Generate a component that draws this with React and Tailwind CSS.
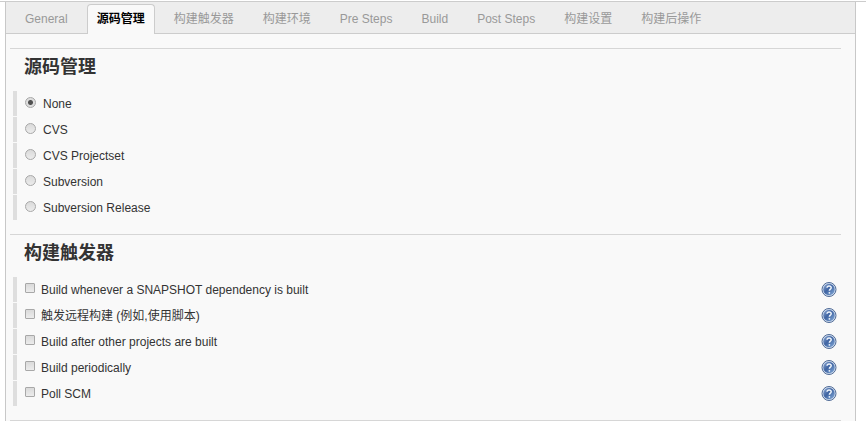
import React, { useState } from 'react';
import clsx from 'clsx';

const TABS = [
  'General',
  '源码管理',
  '构建触发器',
  '构建环境',
  'Pre Steps',
  'Build',
  'Post Steps',
  '构建设置',
  '构建后操作',
];

const SCM_OPTIONS = ['None', 'CVS', 'CVS Projectset', 'Subversion', 'Subversion Release'];

const TRIGGERS = [
  'Build whenever a SNAPSHOT dependency is built',
  '触发远程构建 (例如,使用脚本)',
  'Build after other projects are built',
  'Build periodically',
  'Poll SCM',
];

const HelpIcon = () => (
  <svg width="16" height="16" viewBox="0 0 16 16" aria-hidden="true">
    <defs>
      <linearGradient id="help-fill" x1="0" y1="0" x2="1" y2="1">
        <stop offset="0" stopColor="#8fabd6" />
        <stop offset="0.45" stopColor="#3f64a2" />
        <stop offset="1" stopColor="#86addb" />
      </linearGradient>
    </defs>
    <circle cx="8" cy="7.5" r="7" fill="#d3dfef" stroke="#4f6a96" strokeWidth="1" />
    <circle cx="8" cy="7.5" r="5.7" fill="url(#help-fill)" />
    <path
      d="M6 5.8C6.1 4.5 7 3.9 8.1 3.9c1.3 0 2.1.7 2.1 1.8 0 1.4-1.8 1.5-1.8 3"
      fill="none"
      stroke="#eef4fb"
      strokeWidth="1.5"
    />
    <circle cx="8.4" cy="10.8" r="0.9" fill="#eef4fb" />
  </svg>
);

const Section = ({ title, children }) => (
  <section className="ml-1 mr-[14px] border-t border-[#d6d6d6] pb-[13px]">
    <h2 className="h-[42px] pl-[14px] pt-1 text-lg leading-7 font-bold text-[#333]">{title}</h2>
    <div className="pl-[3px]">{children}</div>
  </section>
);

const Row = ({ children }) => (
  <div className="flex h-[26px] items-center pr-1">
    <span className="mr-2 h-[25px] w-1 self-start bg-[#dedede]" />
    {children}
  </div>
);

const App = () => {
  const [activeTab, setActiveTab] = useState('源码管理');
  const [scm, setScm] = useState('None');

  return (
    <div className="overflow-hidden bg-white pt-px font-['Liberation_Sans','Noto_Sans_CJK_SC',sans-serif] text-xs text-[#333]">
      <div className="border-t border-[#ccc] pl-[5px] pr-[10px]">
        <div className="border-x border-[#c8c8c8] bg-[#f9f9f9]">
          {/* Tabs */}
          <nav className="flex h-8 items-end gap-[9px] border-b border-[#ccc] bg-[#ededed] pl-[9px]">
            {TABS.map((tab) => (
              <button
                key={tab}
                onClick={() => setActiveTab(tab)}
                className={clsx(
                  '-mb-px h-[30px] whitespace-nowrap rounded-t border border-b-0 px-[9px] pb-[2px]',
                  tab === activeTab
                    ? 'border-[#ccc] bg-[#f9f9f9] font-bold text-black'
                    : 'border-transparent text-[#999]'
                )}
              >
                {tab}
              </button>
            ))}
          </nav>

          {/* Config sections */}
          <div className="pt-[14px]">
            <Section title="源码管理">
              {SCM_OPTIONS.map((name) => (
                <Row key={name}>
                  <label className="flex items-center gap-[7px]">
                    <input
                      type="radio"
                      name="scm"
                      checked={scm === name}
                      onChange={() => setScm(name)}
                      className="mb-1 size-[11px] appearance-none rounded-full border border-[#a8a8a8] bg-linear-to-b from-[#dadada] to-[#ececec] checked:bg-[radial-gradient(circle,#505050_2px,#dedede_3px)]"
                    />
                    {name}
                  </label>
                </Row>
              ))}
            </Section>

            <Section title="构建触发器">
              {TRIGGERS.map((name) => (
                <Row key={name}>
                  <label className="flex items-center gap-[6px]">
                    <input
                      type="checkbox"
                      className="mb-1 size-[10px] appearance-none rounded-[1px] border border-[#a8a8a8] bg-linear-to-b from-[#dadada] to-[#ececec] checked:bg-[#666] checked:bg-none"
                    />
                    {name}
                  </label>
                  <button className="ml-auto" aria-label={`Help for ${name}`}>
                    <HelpIcon />
                  </button>
                </Row>
              ))}
            </Section>

            <div className="ml-1 mr-[14px] border-t border-[#d6d6d6]" />
          </div>
        </div>
      </div>
    </div>
  );
};

export default App;
